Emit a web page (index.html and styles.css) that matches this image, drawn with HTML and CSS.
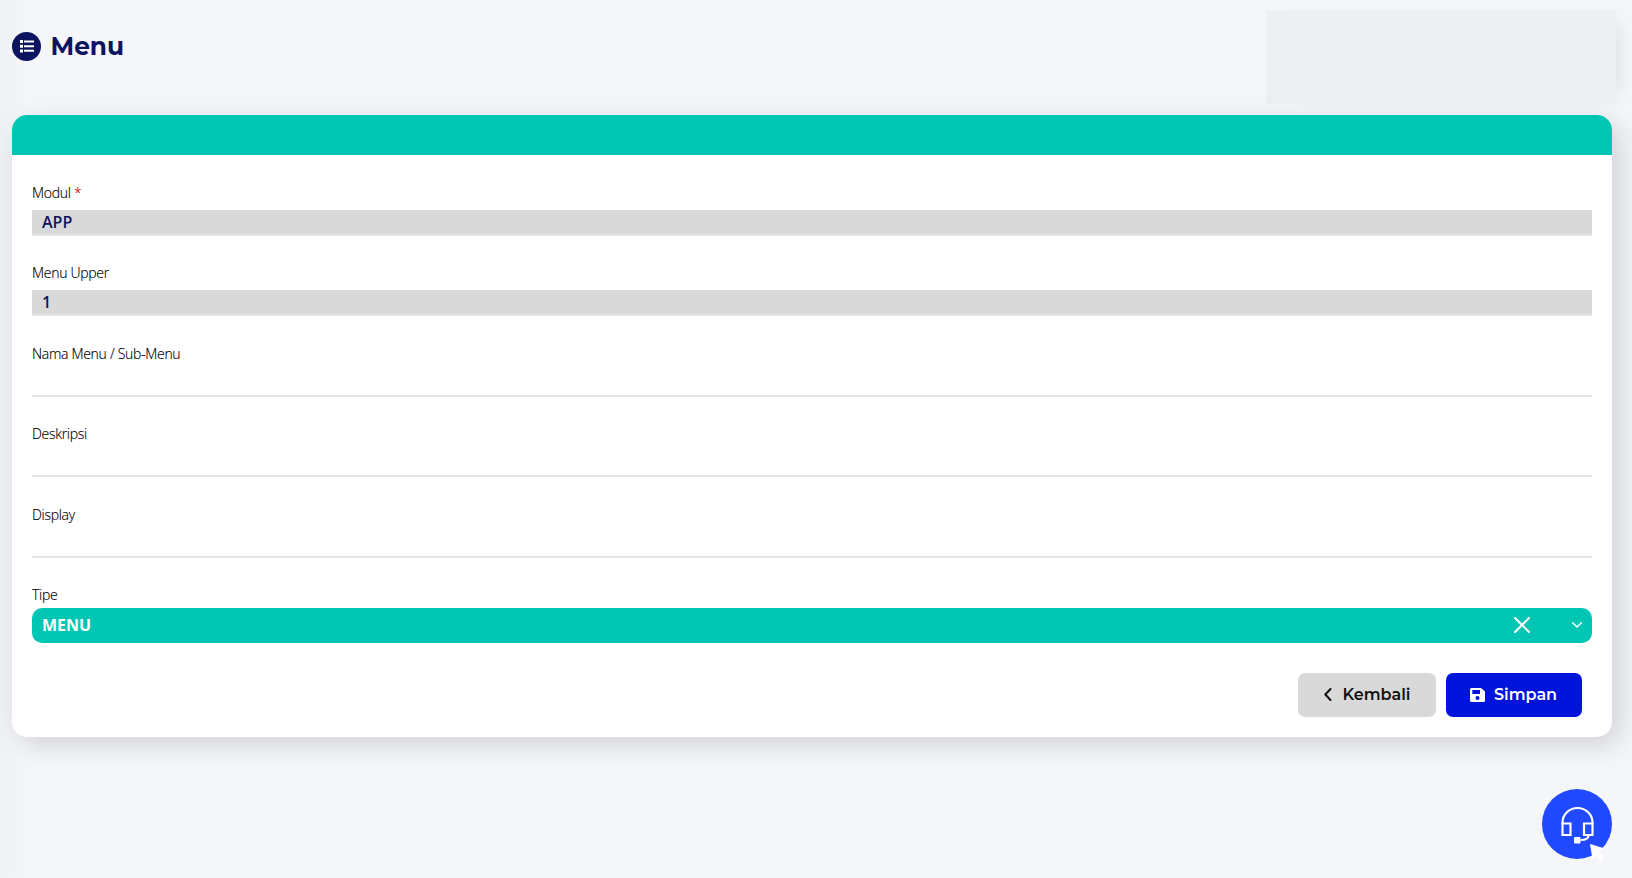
FILE: index.html
```html
<!DOCTYPE html>
<html lang="id">

<head>
  <meta charset="UTF-8">
  <title>Menu</title>
  <link rel="stylesheet" href="styles.css">
</head>

<body>

  <header class="page-header">
    <h1 class="page-title">
      <span class="title-icon">
        <svg width="14" height="13" viewBox="0 0 14 13" fill="#fff">
          <path d="M0 0h3v3H0zM0 4.8h3v3H0zM0 9.4h3v3H0zM4 .6h10v2H4zM4 5.2h10v2H4zM4 9.8h10v2H4z" />
        </svg>
      </span>
      <span class="title-text">Menu</span>
    </h1>
    <div class="user-box"></div>
  </header>

  <main class="card">
    <div class="card-header"></div>

    <form id="menuForm" class="card-body">
      <div class="field">
        <label for="modul">Modul <span class="required">*</span></label>
        <input type="text" id="modul" name="modul" value="APP" readonly>
      </div>
      <div class="field">
        <label for="upper">Menu Upper</label>
        <input type="text" id="upper" name="upper" value="1" readonly>
      </div>
      <div class="field">
        <label for="nama">Nama Menu / Sub-Menu</label>
        <input type="text" id="nama" name="nama">
      </div>
      <div class="field">
        <label for="deskripsi">Deskripsi</label>
        <input type="text" id="deskripsi" name="deskripsi">
      </div>
      <div class="field">
        <label for="display">Display</label>
        <input type="text" id="display" name="display">
      </div>
      <div class="field field-tipe">
        <label>Tipe</label>
        <div class="select">
          <span class="select-value">MENU</span>
          <svg class="clear" width="16" height="16" viewBox="0 0 16 16" fill="none" stroke="#fff" stroke-width="2" stroke-linecap="round">
            <path d="M1 1l14 14M15 1L1 15" />
          </svg>
          <svg class="arrow" width="10" height="6" viewBox="0 0 10 6" fill="none" stroke="#fff" stroke-width="1.4" stroke-linecap="round" stroke-linejoin="round">
            <path d="M.7 .7L5 5 9.300 .7" />
          </svg>
        </div>
      </div>

      <div class="actions">
        <button type="button" class="btn btn-back">
          <svg width="8" height="13" viewBox="0 0 8 13" fill="none" stroke="#111" stroke-width="2" stroke-linecap="round" stroke-linejoin="round">
            <path d="M6.500 1L1.300 6.500l5.200 5.500" />
          </svg>
          <span class="btn-text">Kembali</span>
        </button>
        <button type="submit" class="btn btn-save">
          <svg width="15" height="14" viewBox="0 0 15 14" fill="#fff" fill-rule="evenodd">
            <path d="M1.500 0H11l4 3.500v9a1.500 1.500 0 0 1-1.500 1.500h-12A1.500 1.500 0 0 1 0 12.500v-11A1.500 1.500 0 0 1 1.500 0zM2.300 2v4h7.700V2zM7.500 8a2 2 0 1 0 0 4 2 2 0 0 0 0-4z" />
          </svg>
          <span class="btn-text">Simpan</span>
        </button>
      </div>
    </form>
  </main>

  <a class="help" href="#" aria-label="Bantuan">
    <svg width="70" height="74" viewBox="0 0 70 74" fill="none" stroke="#fff" stroke-width="2.200">
      <circle cx="35" cy="35" r="35" fill="#2149ff" stroke="none" />
      <path d="M20.500 34.500v-1a15 14.500 0 0 1 30 0v1" />
      <path d="M20.500 34.500h8v11.500h-8zM42 34.500h8.500V46H42z" />
      <path d="M46.500 46c0 3.500-2.500 5-8 5" />
      <rect x="32" y="48" width="6.500" height="6.500" rx="1" fill="#fff" stroke="none" />
      <path d="M48.500 55.500L61 59.500l-4.500 4 5 5.500-3.500 3-5-6-2 3.500z" fill="#fff" stroke-width="1" stroke-linejoin="round" />
    </svg>
  </a>

</body>

</html>
```

FILE: styles.css
```css
* {
  box-sizing: border-box;
}

body {
  margin: 0;
  height: 878px;
  padding: 10px 16px 0 12px;
  overflow: hidden;
  font-family: "Open Sans", sans-serif;
  background: linear-gradient(to right, #eff1f5, #f4f6fa 26px);
}

/* Judul halaman */
.page-header {
  display: flex;
  justify-content: space-between;
  height: 105px;
}

.page-title {
  display: flex;
  align-items: center;
  gap: 9.5px;
  height: 72px;
  margin: 0;
  color: #0d145f;
  font-family: Montserrat, Inter, sans-serif;
  font-size: 24.8px;
  font-weight: 700;
}

.title-icon {
  display: flex;
  align-items: center;
  justify-content: center;
  width: 29px;
  height: 29px;
  border-radius: 50%;
  background: #0d145f;
}

.user-box {
  width: 350px;
  height: 94px;
  background: #edeff3;
  box-shadow: 14px 2px 20px -12px rgba(0, 0, 0, 0.1);
}

/* Kartu form */
.card {
  position: relative;
  width: 1600px;
  height: 622px;
  border-radius: 15px;
  background: #fff;
  box-shadow: 8px 8px 28px rgba(0, 0, 0, 0.15);
}

.card-header {
  height: 40px;
  border-radius: 15px 15px 0 0;
  background: #00c6b3;
}

.card-body {
  padding: 26px 20px 20px;
}

.field {
  height: 80.4px;
}

label {
  display: block;
  height: 29px;
  line-height: 24px;
  font-size: 14px;
  font-weight: 300;
  letter-spacing: -0.3px;
  color: #000;
  -webkit-text-stroke: 0.15px;
}

.required {
  color: #c00;
}

input[type="text"] {
  display: block;
  width: 100%;
  height: 26px;
  padding: 0 10px;
  border: none;
  border-bottom: 2px solid #e5e5ec;
  outline: none;
  color: #0d145f;
  font-family: "Open Sans", sans-serif;
  font-size: 16px;
  font-weight: 600;
}

input[readonly] {
  background: #d9d9d9;
}

.field-tipe {
  height: 90px;
}

.field-tipe label {
  height: 25px;
}

.select {
  display: flex;
  align-items: center;
  height: 35px;
  padding: 0 10px;
  border-radius: 10px;
  background: #00c6b3;
  color: #fff;
  font-size: 16px;
  font-weight: 700;
}

.select-value {
  flex: 1;
}

.clear {
  margin-right: 42px;
}

/* Tombol */
.actions {
  display: flex;
  justify-content: flex-end;
  gap: 10px;
  padding-right: 10px;
}

.btn {
  display: flex;
  align-items: center;
  height: 44px;
  padding: 0 0 0 24px;
  border: none;
  border-radius: 7px;
  font-family: Montserrat, Inter, sans-serif;
  font-size: 16px;
  font-weight: 600;
  cursor: pointer;
}

.btn-back {
  gap: 11px;
  width: 138px;
  padding-left: 25.5px;
  background: #d9d9d9;
  color: #111;
}

.btn-save {
  gap: 9px;
  width: 136px;
  background: #0014dc;
  color: #fff;
}

/* Bantuan */
.help {
  position: absolute;
  left: 1542px;
  top: 789px;
  height: 74px;
}
```
